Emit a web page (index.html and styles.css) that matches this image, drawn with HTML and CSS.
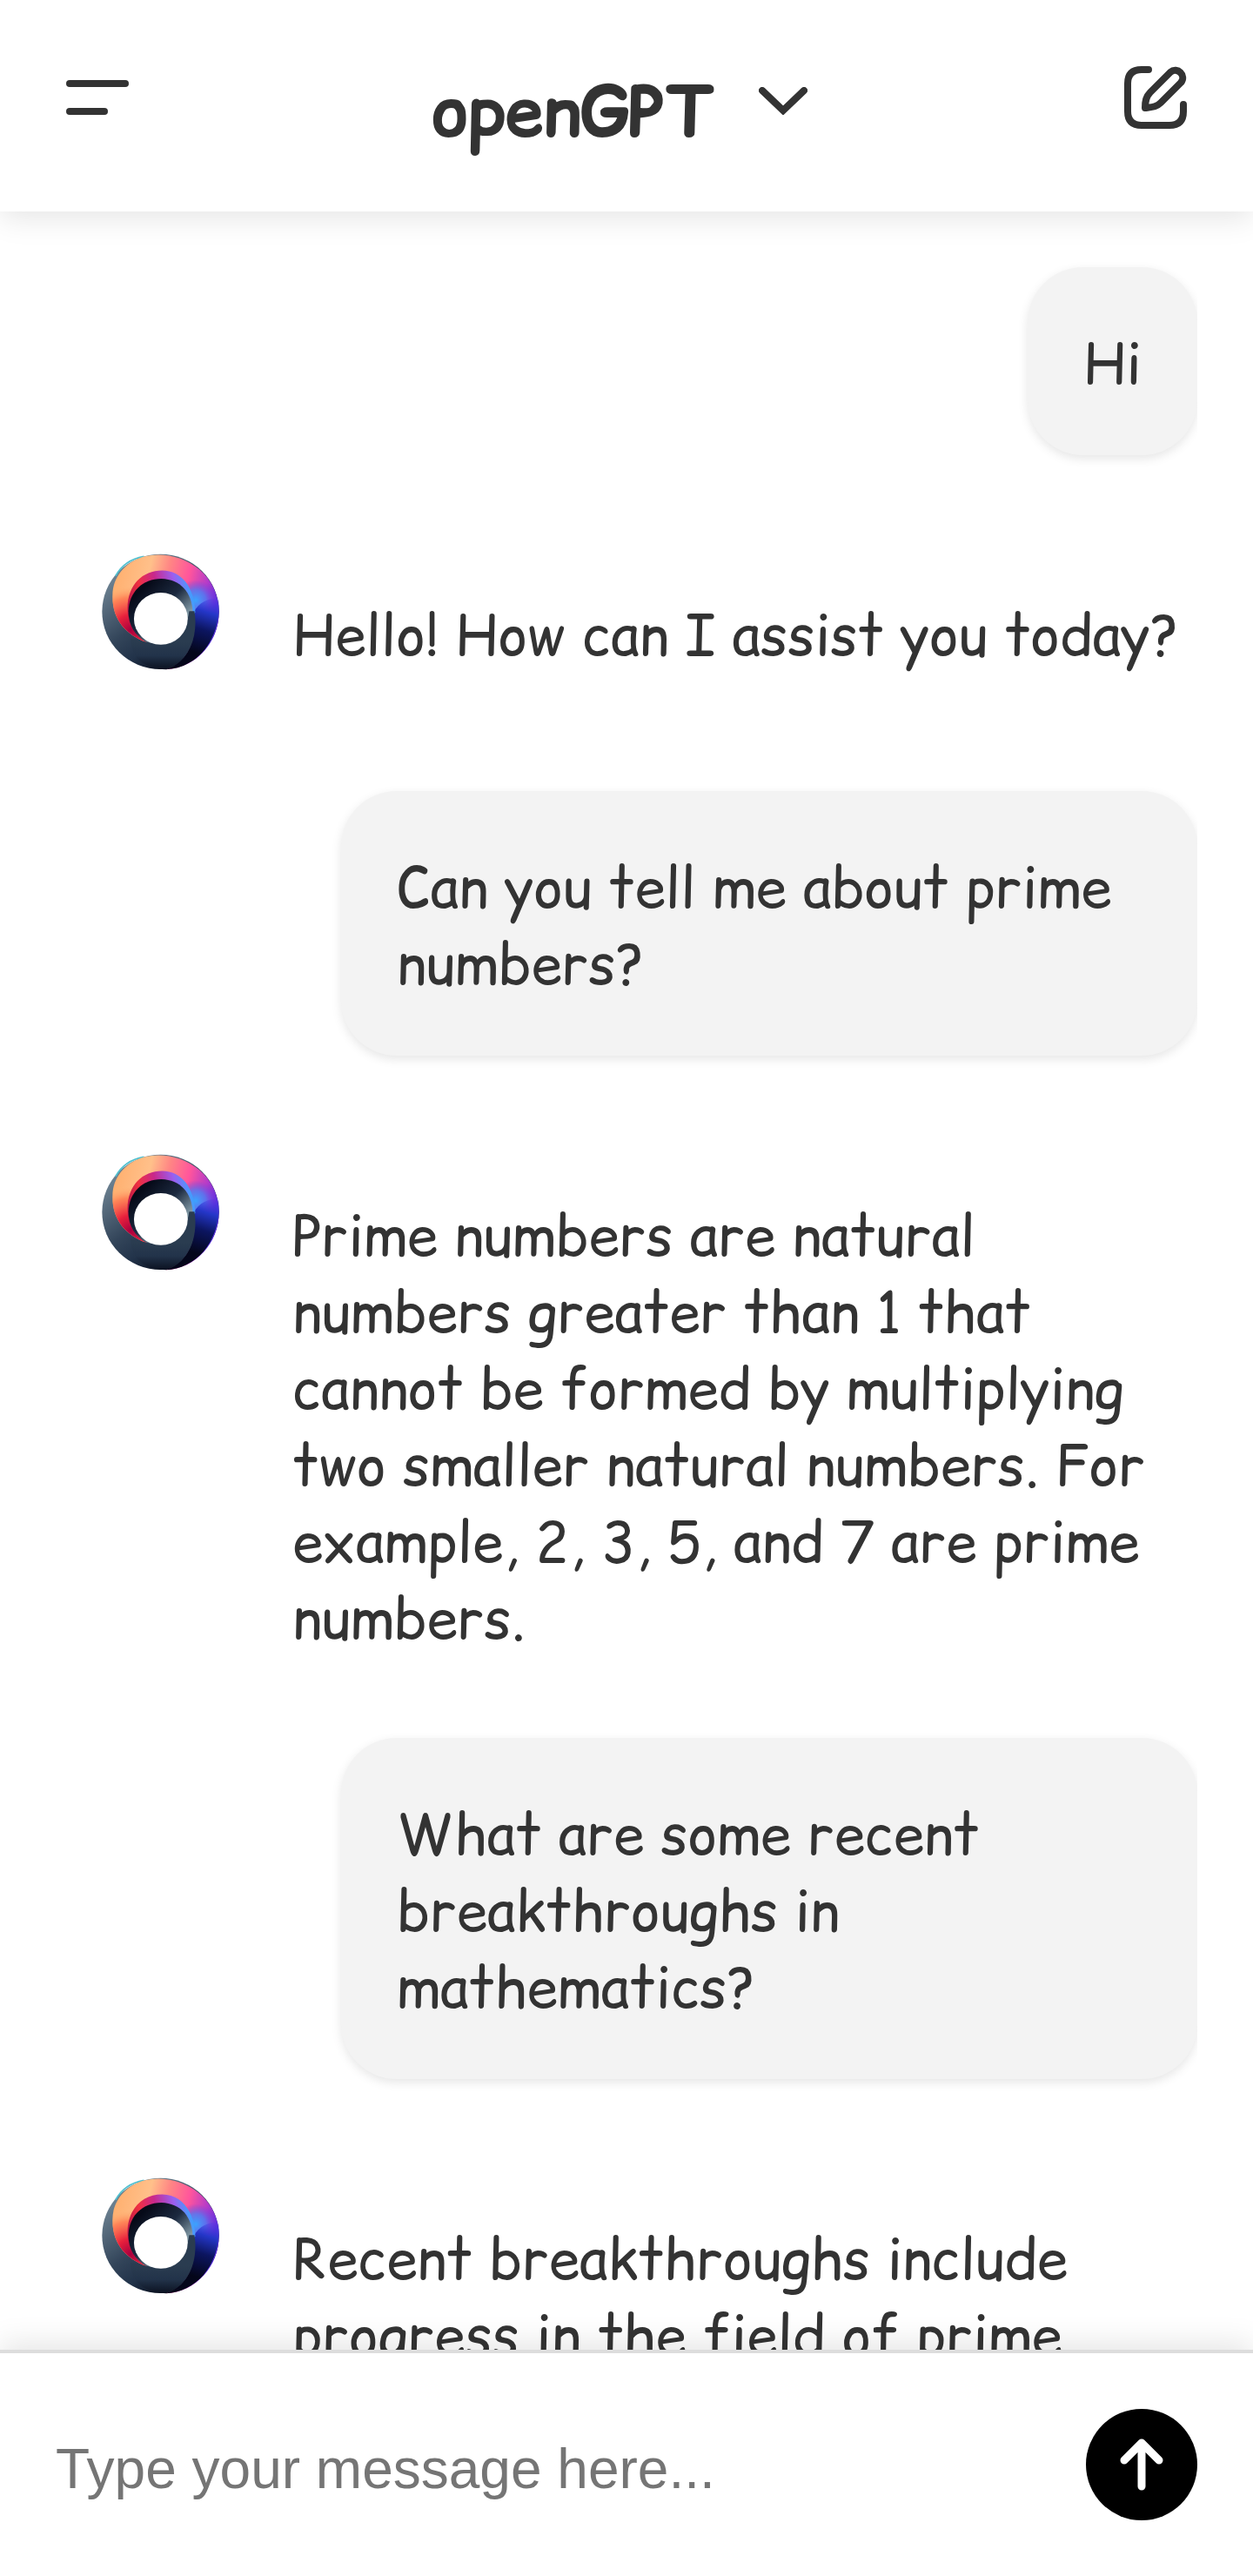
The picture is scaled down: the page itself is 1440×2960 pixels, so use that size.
FILE: index.html
```html
<!DOCTYPE html>
<html lang="en">
<head>
<meta charset="utf-8">
<meta name="viewport" content="width=device-width, initial-scale=1">
<title>openGPT</title>
<link rel="stylesheet" href="styles.css">
</head>
<body>
<svg class="defs" width="0" height="0" aria-hidden="true">
  <defs>
    <linearGradient id="slate" x1="0" y1="0.3" x2="0.5" y2="1">
      <stop offset="0" stop-color="#6a7f8f"/>
      <stop offset="0.5" stop-color="#33455a"/>
      <stop offset="0.75" stop-color="#22334a"/>
      <stop offset="1" stop-color="#0b1120"/>
    </linearGradient>
    <linearGradient id="band" gradientUnits="userSpaceOnUse" x1="100" y1="120" x2="450" y2="200">
      <stop offset="0" stop-color="#ffb070"/>
      <stop offset="0.3" stop-color="#ffc08a"/>
      <stop offset="0.48" stop-color="#ff8584"/>
      <stop offset="0.68" stop-color="#ff559c"/>
      <stop offset="0.86" stop-color="#b63cc8"/>
      <stop offset="1" stop-color="#5a2fe0"/>
    </linearGradient>
    <radialGradient id="flame" gradientUnits="userSpaceOnUse" cx="150" cy="310" r="150">
      <stop offset="0" stop-color="#a8003f"/>
      <stop offset="0.35" stop-color="#e8203c"/>
      <stop offset="0.75" stop-color="#ff7a50" stop-opacity="0.8"/>
      <stop offset="1" stop-color="#ffb070" stop-opacity="0"/>
    </radialGradient>
    <radialGradient id="sky" gradientUnits="userSpaceOnUse" cx="372" cy="208" r="70">
      <stop offset="0" stop-color="#3aa4ff"/>
      <stop offset="0.5" stop-color="#4a7df5" stop-opacity="0.8"/>
      <stop offset="1" stop-color="#5a40e8" stop-opacity="0"/>
    </radialGradient>
    <linearGradient id="night" gradientUnits="userSpaceOnUse" x1="430" y1="190" x2="365" y2="385">
      <stop offset="0" stop-color="#4a35e8" stop-opacity="0"/>
      <stop offset="0.3" stop-color="#2436c8"/>
      <stop offset="0.6" stop-color="#0c1560"/>
      <stop offset="1" stop-color="#04061a"/>
    </linearGradient>
    <linearGradient id="rim" gradientUnits="userSpaceOnUse" x1="140" y1="250" x2="365" y2="200">
      <stop offset="0" stop-color="#b01048"/>
      <stop offset="0.25" stop-color="#f03040"/>
      <stop offset="0.5" stop-color="#c8288c"/>
      <stop offset="0.78" stop-color="#9a5ff0"/>
      <stop offset="1" stop-color="#3aa4ff"/>
    </linearGradient>
    <linearGradient id="well" gradientUnits="userSpaceOnUse" x1="220" y1="140" x2="360" y2="285">
      <stop offset="0" stop-color="#060a18"/>
      <stop offset="0.45" stop-color="#1c2a40"/>
      <stop offset="1" stop-color="#a8c4cc"/>
    </linearGradient>
    <linearGradient id="floor" gradientUnits="userSpaceOnUse" x1="0" y1="350" x2="0" y2="445">
      <stop offset="0" stop-color="#2a3c50"/>
      <stop offset="0.5" stop-color="#22334a"/>
      <stop offset="1" stop-color="#0b1120"/>
    </linearGradient>
    <mask id="hole">
      <rect x="40" y="40" width="430" height="420" fill="#fff"/>
      <ellipse cx="253" cy="271" rx="92" ry="89" fill="#000"/>
    </mask>
    <path id="ribbon" d="M88 190C88 130 130 80 190 60C300 28 452 100 452 248C452 350 375 440 270 445C350 415 378 340 368 265C360 185 320 135 262 128C190 125 140 175 142 245C145 290 165 330 205 352C130 325 85 270 88 190Z"/>
  </defs>
  <symbol id="logo" viewBox="51 49 402 397">
    <g mask="url(#hole)">
      <ellipse cx="252" cy="247" rx="200" ry="197" fill="url(#slate)"/>
      <path d="M98 125C120 85 155 65 195 58" fill="none" stroke="#4fc0cf" stroke-width="5"/>
      <use href="#ribbon" fill="url(#band)"/>
      <use href="#ribbon" fill="url(#flame)"/>
      <use href="#ribbon" fill="url(#sky)"/>
      <path d="M452 200C460 350 375 440 270 445C350 415 378 340 366 250C380 215 420 200 452 200Z" fill="url(#night)"/>
      <path d="M205 352C165 330 139 290 139 235C140 155 190 106 258 106C325 108 366 160 371 250L360 262L170 300Z" fill="url(#rim)"/>
      <path d="M205 352C165 330 142 295 142 245C144 180 190 134 255 134C320 136 358 180 362 245L360 300L253 360Z" fill="url(#well)"/>
      <path d="M205 352C250 370 335 350 350 245L368 245C382 330 350 420 270 445C190 440 150 400 150 340Z" fill="url(#floor)"/>
    </g>
  </symbol>
</svg>

<div class="app">
  <header class="topbar">
    <button class="icon-button" type="button" aria-label="Menu">
      <svg width="72" height="72" viewBox="0 0 72 72" fill="currentColor" aria-hidden="true">
        <rect x="0" y="16" width="72" height="8" rx="4"/>
        <rect x="0" y="48" width="48" height="8" rx="4"/>
      </svg>
    </button>
    <button class="model" type="button">
      <span class="model-name">openGPT</span>
      <svg class="chevron" width="56" height="32" viewBox="0 0 56 32" fill="none" stroke="currentColor" stroke-width="8" stroke-linecap="round" stroke-linejoin="miter" aria-hidden="true">
        <path d="M4 4L28 27L52 4"/>
      </svg>
    </button>
    <button class="icon-button" type="button" aria-label="New chat">
      <svg width="72" height="72" viewBox="0 0 72 72" fill="none" stroke="currentColor" stroke-width="8" stroke-linecap="round" stroke-linejoin="round" aria-hidden="true">
        <path d="M28 4H20Q4 4 4 20V52Q4 68 20 68H52Q68 68 68 52V44"/>
        <path d="M24 48C24 40 25 35 30 30L53 7C61 0 72 11 65 19L42 42C37 47 32 47 24 48Z"/>
      </svg>
    </button>
  </header>

  <main class="chat">
    <div class="thread">
      <div class="user"><p>Hi</p></div>
      <div class="bot">
        <svg class="avatar" role="img" aria-label="openGPT"><use href="#logo"/></svg>
        <p>Hello! How can I assist you today?</p>
      </div>
      <div class="user"><p>Can you tell me about prime numbers?</p></div>
      <div class="bot">
        <svg class="avatar" role="img" aria-label="openGPT"><use href="#logo"/></svg>
        <p>Prime numbers are natural numbers greater than 1 that cannot be formed by multiplying two smaller natural numbers. For example, 2, 3, 5, and 7 are prime numbers.</p>
      </div>
      <div class="user"><p>What are some recent breakthroughs in mathematics?</p></div>
      <div class="bot">
        <svg class="avatar" role="img" aria-label="openGPT"><use href="#logo"/></svg>
        <p>Recent breakthroughs include<br>progress in the field of prime</p>
      </div>
    </div>
  </main>

  <form class="composer">
    <input class="message" type="text" placeholder="Type your message here..." aria-label="Message">
    <button class="send" type="button" aria-label="Send">
      <svg width="60" height="64" viewBox="0 0 60 64" fill="none" stroke="currentColor" stroke-width="9" stroke-linecap="round" stroke-linejoin="round" aria-hidden="true">
        <path d="M30 57V7M10 27L30 7L50 27"/>
      </svg>
    </button>
  </form>
</div>
</body>
</html>
```
FILE: styles.css
```css
* {
  box-sizing: border-box;
}

body {
  margin: 0;
  background: #fff;
  color: #333;
  font-family: "Comic Sans MS", "Comic Relief", "Comic Neue", cursive;
  font-size: 64px;
  line-height: 88px;
}

p {
  margin: 3px 0 -3px;
}

button {
  padding: 0;
  border: 0;
  background: none;
  color: inherit;
  font: inherit;
}

svg {
  display: block;
  flex: none;
}

.defs {
  position: absolute;
}

.app {
  display: flex;
  flex-direction: column;
  height: 100vh;
}

.topbar {
  position: relative;
  z-index: 1;
  display: flex;
  align-items: flex-start;
  justify-content: space-between;
  padding: 76px 76px 63px;
  background: #fff;
  box-shadow: 0 8px 32px rgba(0, 0, 0, 0.1);
}

.model {
  display: flex;
  align-items: flex-start;
  gap: 52px;
  padding-right: 16px;
}

.model-name {
  font-size: 80px;
  font-weight: 700;
  line-height: 104px;
}

.chevron {
  margin-top: 24px;
}

.chat {
  flex: 1;
  min-height: 0;
  padding: 0 64px;
}

.thread {
  display: flex;
  flex-direction: column;
  gap: 96px;
  height: 100%;
  padding-top: 64px;
  overflow: hidden;
}

.user {
  flex: none;
  align-self: flex-end;
  max-width: 75%;
  padding: 64px;
  border-radius: 64px;
  background: #f3f3f3;
  box-shadow: 0 4px 12px rgba(0, 0, 0, 0.1);
}

.bot {
  display: flex;
  flex: none;
  gap: 84px;
  min-height: 194px;
  padding-left: 53px;
}

.bot p {
  flex: 1;
  padding-top: 64px;
}

.avatar {
  width: 135px;
  height: 134px;
  margin-top: 17px;
}

.composer {
  position: relative;
  z-index: 1;
  display: flex;
  align-items: center;
  gap: 64px;
  padding: 64px;
  border-top: 4px solid #ddd;
  background: #fff;
  box-shadow: 0 -8px 32px rgba(0, 0, 0, 0.1);
}

.message {
  flex: 1;
  min-width: 0;
  padding: 10px 0 0;
  border: 0;
  outline: 0;
  background: none;
  color: #333;
  font-family: "Liberation Sans", Arial, sans-serif;
  font-size: 64px;
}

.message::placeholder {
  color: #757575;
}

.send {
  display: flex;
  align-items: center;
  justify-content: center;
  width: 128px;
  height: 128px;
  border-radius: 50%;
  background: #000;
  color: #fff;
}
```
